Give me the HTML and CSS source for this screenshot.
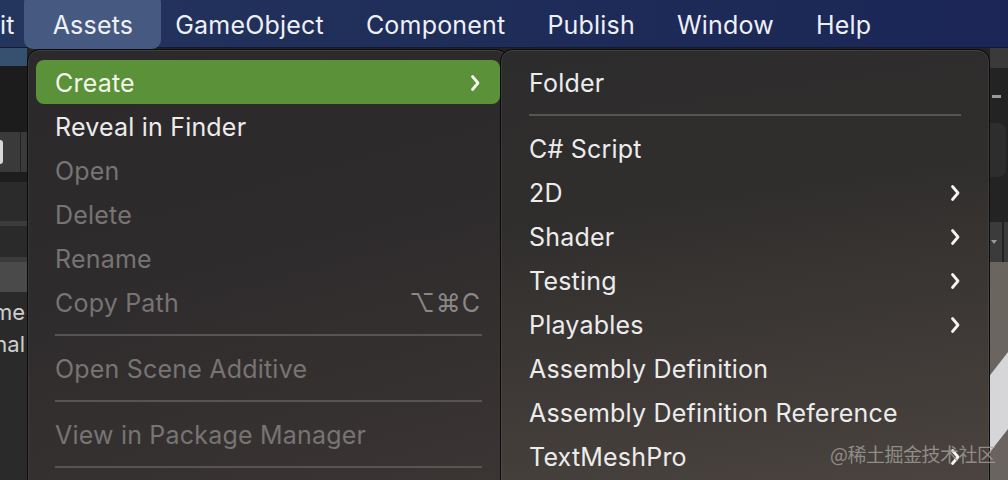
FILE: index.html
```html
<!DOCTYPE html>
<html lang="en">
<head>
<meta charset="utf-8">
<title>Assets menu</title>
<link rel="stylesheet" href="styles.css">
</head>
<body>
<div class="app">
  <header class="menubar">
    <span class="mb-item mb-cut">it</span>
    <span class="mb-item mb-active">Assets</span>
    <span class="mb-item">GameObject</span>
    <span class="mb-item">Component</span>
    <span class="mb-item">Publish</span>
    <span class="mb-item">Window</span>
    <span class="mb-item">Help</span>
  </header>

  <div class="workspace">
    <div class="strip strip-left">
      <div class="blk tab"></div>
      <div class="blk dark1"></div>
      <div class="blk toolbar"><span class="knob"></span><span class="vdiv"></span></div>
      <div class="blk dark2"></div>
      <div class="blk field"></div>
      <div class="blk rule"></div>
      <div class="blk field2"></div>
      <div class="blk rule"></div>
      <div class="blk header"></div>
      <div class="blk list">
        <div class="list-row">me</div>
        <div class="list-row">nal</div>
      </div>
    </div>
    <div class="center"></div>
    <div class="strip strip-right">
      <div class="blk r-tab"></div>
      <div class="blk r-dark"><span class="dash"></span></div>
      <div class="blk r-box"><span class="r-round"></span></div>
      <div class="blk r-dark2"></div>
      <div class="blk r-toolbar"><span class="caret"></span><span class="vdiv2"></span></div>
      <div class="blk scene"><span class="scene-obj"></span></div>
    </div>
  </div>

  <nav class="menu menu-main">
    <div class="item active">
      <span>Create</span>
      <svg class="chev" viewBox="0 0 10 18" width="10" height="18"><path d="M2.5 2.5 L8 9 L2.5 15.5"/></svg>
    </div>
    <div class="item">Reveal in Finder</div>
    <div class="item off">Open</div>
    <div class="item off">Delete</div>
    <div class="item off">Rename</div>
    <div class="item off"><span>Copy Path</span><span class="shortcut">⌥⌘C</span></div>
    <div class="sep"></div>
    <div class="item off">Open Scene Additive</div>
    <div class="sep"></div>
    <div class="item off">View in Package Manager</div>
    <div class="sep"></div>
  </nav>

  <nav class="menu menu-sub">
    <div class="item">Folder</div>
    <div class="sep"></div>
    <div class="item">C# Script</div>
    <div class="item"><span>2D</span><svg class="chev" viewBox="0 0 10 18" width="10" height="18"><path d="M2.5 2.5 L8 9 L2.5 15.5"/></svg></div>
    <div class="item"><span>Shader</span><svg class="chev" viewBox="0 0 10 18" width="10" height="18"><path d="M2.5 2.5 L8 9 L2.5 15.5"/></svg></div>
    <div class="item"><span>Testing</span><svg class="chev" viewBox="0 0 10 18" width="10" height="18"><path d="M2.5 2.5 L8 9 L2.5 15.5"/></svg></div>
    <div class="item"><span>Playables</span><svg class="chev" viewBox="0 0 10 18" width="10" height="18"><path d="M2.5 2.5 L8 9 L2.5 15.5"/></svg></div>
    <div class="item">Assembly Definition</div>
    <div class="item">Assembly Definition Reference</div>
    <div class="item"><span>TextMeshPro</span><svg class="chev" viewBox="0 0 10 18" width="10" height="18"><path d="M2.5 2.5 L8 9 L2.5 15.5"/></svg></div>
  </nav>

  <div class="watermark">@稀土掘金技术社区</div>
</div>
</body>
</html>
```

FILE: styles.css
```css
* { box-sizing: border-box; }
html, body {
  margin: 0;
  padding: 0;
  width: 1008px;
  height: 480px;
  overflow: hidden;
  background: #232323;
}
.app {
  position: relative;
  width: 1008px;
  height: 480px;
  overflow: hidden;
  font-family: "Inter", "Noto Sans", "Noto Sans CJK SC", sans-serif;
  font-size: 25px;
  letter-spacing: 0.2px;
  color: #ececec;
}

/* ---------- top menu bar ---------- */
.menubar {
  height: 48px;
  display: flex;
  align-items: center;
  gap: 42px;
  padding-left: 0;
  background: linear-gradient(90deg, #24355e 0%, #1f2d59 45%, #1b2656 100%);
  border-bottom: 1px solid #111a33;
  color: #eef0f6;
  white-space: nowrap;
}
.mb-item {
  position: relative;
  z-index: 0;
  line-height: 48px;
  top: 1px;
}
.mb-cut { margin-left: 0; margin-right: -4px; }
.mb-active::before {
  content: "";
  position: absolute;
  left: -29px;
  right: -28px;
  top: -7px;
  bottom: 0;
  border-radius: 9px;
  background: #465981;
  z-index: -1;
}

/* ---------- background application ---------- */
.workspace {
  display: flex;
  height: 432px;
}
.strip {
  display: flex;
  flex-direction: column;
}
.strip-left { width: 27px; }
.strip-right { width: 18px; }
.center { flex: 1; background: #232323; }
.blk { flex: none; position: relative; }
.tab { height: 18px; background: #36506f; }
.dark1 { height: 66px; background: #1c1c1c; }
.toolbar { height: 40px; background: #3a3a3a; }
.knob {
  position: absolute; left: -3px; top: 8px;
  width: 6px; height: 24px; border-radius: 3px; background: #d8d8d8;
}
.vdiv { position: absolute; left: 20px; top: 0; bottom: 0; width: 1px; background: #222; }
.dark2 { height: 10px; background: #1d1d1d; }
.field { height: 39px; background: #2b2b2b; }
.rule { height: 5px; background: #3b3b3b; }
.field2 { height: 31px; background: #2a2a2a; }
.header { height: 30px; background: #4a4a4a; }
.list {
  flex: 1; background: #2a2a2a; overflow: hidden;
  padding-top: 4px;
}
.list-row {
  height: 32px; line-height: 32px;
  display: flex; justify-content: flex-end;
  color: #cfcfcf; font-size: 22px;
  letter-spacing: 0;
  white-space: nowrap;
  margin-right: 2px;
}

.r-tab { height: 20px; background: #3a3a3a; }
.r-dark { height: 55px; background: #232323; }
.dash { position: absolute; left: 2px; top: 27px; width: 9px; height: 3px; background: #9a9a9a; }
.r-box { height: 54px; background: #232323; }
.r-round { position: absolute; left: 0; right: 2px; top: 0; bottom: 0; background: #2d2d2d; border-radius: 0 8px 8px 0; }
.r-dark2 { height: 45px; background: #232323; }
.r-toolbar { height: 40px; background: #3b3b3b; }
.caret { position: absolute; left: 1px; top: 18px; border-left: 3px solid transparent; border-right: 3px solid transparent; border-top: 4px solid #999; }
.vdiv2 { position: absolute; left: 12px; top: 0; bottom: 0; width: 2px; background: #222; }
.scene { flex: 1; background: linear-gradient(180deg, #6b6560 0%, #6a6460 100%); overflow: hidden; }
.scene-obj {
  position: absolute; top: 85px; left: 22px; width: 60px; height: 200px;
  background: #d6d6d8;
  transform: skewX(-38deg);
  transform-origin: top left;
}

/* ---------- menus (overlay) ---------- */
.menu {
  position: absolute;
  border: 1px solid #0b0b0b;
  border-bottom: none;
  border-radius: 13px 13px 0 0;
  box-shadow: inset 0 1px 0 rgba(255,255,255,0.10), inset 1px 0 0 rgba(255,255,255,0.06), inset -1px 0 0 rgba(255,255,255,0.06);
  padding: 10px 8px 0 8px;
  white-space: nowrap;
}
.menu-main {
  left: 27px;
  top: 49px;
  width: 482px;
  height: 440px;
  background: linear-gradient(165deg, #2b292a 0%, #2e2b2c 45%, #3b3534 100%);
  z-index: 2;
}
.menu-sub {
  left: 500px;
  top: 49px;
  width: 490px;
  height: 440px;
  background: linear-gradient(172deg, #2d2c2c 0%, #302e2d 35%, #3f3a37 70%, #4b4440 100%);
  z-index: 3;
}
.item {
  height: 44px;
  display: flex;
  align-items: center;
  justify-content: space-between;
  padding: 1px 20px 0 19px;
  border-radius: 8px;
  color: #ececec;
}
.menu-sub .item { padding: 1px 21px 0 20px; }
.item.active {
  background: #5a9139;
  color: #f1f7ea;
}
.item.off { color: #777474; }
.shortcut { color: #8a8787; letter-spacing: 1px; margin-right: -1px; }
.chev { display: block; }
.chev path {
  fill: none;
  stroke: #f4f4f4;
  stroke-width: 2.8;
  stroke-linecap: round;
  stroke-linejoin: round;
}
.sep {
  height: 22px;
  padding-top: 10px;
  margin: 0 18px 0 19px;
}
.sep::after {
  content: "";
  display: block;
  height: 2px;
  background: #575454;
}
.menu-sub .sep { margin: 0 20px 0 20px; }

.watermark {
  position: absolute;
  left: 830px;
  top: 440px;
  z-index: 5;
  font-family: "Noto Sans CJK SC", sans-serif;
  font-size: 19px;
  color: rgba(170, 165, 160, 0.75);
  white-space: nowrap;
  letter-spacing: -0.5px;
}
```
